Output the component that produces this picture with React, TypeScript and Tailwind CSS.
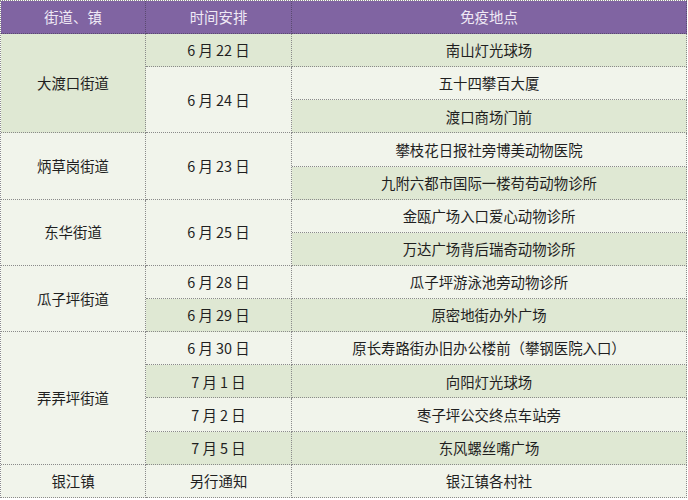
import React from 'react';

interface Cell {
  text: string;
  cls: string; // grid placement, written out in full
  green?: boolean;
}

const cells: Cell[] = [
  // column 1: street / town
  { text: '大渡口街道', cls: 'col-start-1 row-start-2 row-span-3', green: true },
  { text: '炳草岗街道', cls: 'col-start-1 row-start-5 row-span-2' },
  { text: '东华街道', cls: 'col-start-1 row-start-7 row-span-2' },
  { text: '瓜子坪街道', cls: 'col-start-1 row-start-9 row-span-2' },
  { text: '弄弄坪街道', cls: 'col-start-1 row-start-11 row-span-4' },
  { text: '银江镇', cls: 'col-start-1 row-start-15 row-span-1' },

  // column 2: date
  { text: '6 月 22 日', cls: 'col-start-2 row-start-2 row-span-1', green: true },
  { text: '6 月 24 日', cls: 'col-start-2 row-start-3 row-span-2' },
  { text: '6 月 23 日', cls: 'col-start-2 row-start-5 row-span-2' },
  { text: '6 月 25 日', cls: 'col-start-2 row-start-7 row-span-2' },
  { text: '6 月 28 日', cls: 'col-start-2 row-start-9 row-span-1' },
  { text: '6 月 29 日', cls: 'col-start-2 row-start-10 row-span-1', green: true },
  { text: '6 月 30 日', cls: 'col-start-2 row-start-11 row-span-1' },
  { text: '7 月 1 日', cls: 'col-start-2 row-start-12 row-span-1', green: true },
  { text: '7 月 2 日', cls: 'col-start-2 row-start-13 row-span-1' },
  { text: '7 月 5 日', cls: 'col-start-2 row-start-14 row-span-1', green: true },
  { text: '另行通知', cls: 'col-start-2 row-start-15 row-span-1' },

  // column 3: location
  { text: '南山灯光球场', cls: 'col-start-3 row-start-2', green: true },
  { text: '五十四攀百大厦', cls: 'col-start-3 row-start-3' },
  { text: '渡口商场门前', cls: 'col-start-3 row-start-4', green: true },
  { text: '攀枝花日报社旁博美动物医院', cls: 'col-start-3 row-start-5' },
  { text: '九附六都市国际一楼苟苟动物诊所', cls: 'col-start-3 row-start-6', green: true },
  { text: '金瓯广场入口爱心动物诊所', cls: 'col-start-3 row-start-7' },
  { text: '万达广场背后瑞奇动物诊所', cls: 'col-start-3 row-start-8', green: true },
  { text: '瓜子坪游泳池旁动物诊所', cls: 'col-start-3 row-start-9' },
  { text: '原密地街办外广场', cls: 'col-start-3 row-start-10', green: true },
  { text: '原长寿路街办旧办公楼前（攀钢医院入口）', cls: 'col-start-3 row-start-11' },
  { text: '向阳灯光球场', cls: 'col-start-3 row-start-12', green: true },
  { text: '枣子坪公交终点车站旁', cls: 'col-start-3 row-start-13' },
  { text: '东风螺丝嘴广场', cls: 'col-start-3 row-start-14', green: true },
  { text: '银江镇各村社', cls: 'col-start-3 row-start-15' },
];

const headers = ['街道、镇', '时间安排', '免疫地点'];

export default function App() {
  return (
    <div
      className="w-[688px] h-[500px] bg-white"
      style={{ fontFamily: '"Noto Sans CJK SC", "Noto Sans", sans-serif' }}
    >
      <div className="grid grid-cols-[145px_146px_395px] grid-rows-[33px_repeat(14,33.14px)] w-[687px] border-l border-t border-dotted border-[#8a8a8a] text-[14.4px] text-[#1f1f1f]">
        {headers.map((h) => (
          <div
            key={h}
            className="flex items-center justify-center bg-[#8064a2] text-[#efe9f5] border-r border-b border-dotted border-[#5a4a70]"
          >
            {h}
          </div>
        ))}
        {cells.map((c) => (
          <div
            key={c.text + c.cls}
            className={`${c.cls} flex items-center justify-center whitespace-nowrap border-r border-b border-dotted border-[#8a8a8a] ${
              c.green ? 'bg-[#dfe8d3]' : 'bg-[#f1f4eb]'
            }`}
          >
            {c.text}
          </div>
        ))}
      </div>
    </div>
  );
}
